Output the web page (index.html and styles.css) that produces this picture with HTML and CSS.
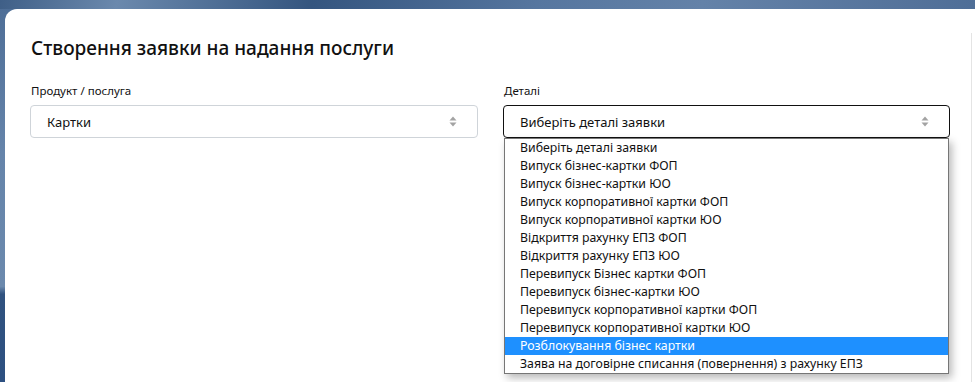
FILE: index.html
```html
<!DOCTYPE html>
<html lang="uk">
<head>
<meta charset="utf-8">
<title>Створення заявки</title>
<link rel="stylesheet" href="styles.css">
</head>
<body>
<div class="card">
  <h1 class="title">Створення заявки на надання послуги</h1>
  <div class="form-row">
    <div class="field">
      <label class="label">Продукт / послуга</label>
      <div class="select">
        <span class="value">Картки</span>
        <svg class="caret" width="8" height="11" viewBox="0 0 8 11"><path d="M4 0.5 L7.5 4.5 H0.5 Z M4 10.5 L7.5 6.5 H0.5 Z" fill="#a3a3a3"/></svg>
      </div>
    </div>
    <div class="field">
      <label class="label">Деталі</label>
      <div class="select focused">
        <span class="value">Виберіть деталі заявки</span>
        <svg class="caret" width="8" height="11" viewBox="0 0 8 11"><path d="M4 0.5 L7.5 4.5 H0.5 Z M4 10.5 L7.5 6.5 H0.5 Z" fill="#a3a3a3"/></svg>
        <ul class="options">
          <li>Виберіть деталі заявки</li>
          <li>Випуск бізнес-картки ФОП</li>
          <li>Випуск бізнес-картки ЮО</li>
          <li>Випуск корпоративної картки ФОП</li>
          <li>Випуск корпоративної картки ЮО</li>
          <li>Відкриття рахунку ЕПЗ ФОП</li>
          <li>Відкриття рахунку ЕПЗ ЮО</li>
          <li>Перевипуск Бізнес картки ФОП</li>
          <li>Перевипуск бізнес-картки ЮО</li>
          <li>Перевипуск корпоративної картки ФОП</li>
          <li>Перевипуск корпоративної картки ЮО</li>
          <li class="active">Розблокування бізнес картки</li>
          <li>Заява на договірне списання (повернення) з рахунку ЕПЗ</li>
        </ul>
      </div>
    </div>
  </div>
</div>
</body>
</html>
```
FILE: styles.css
```css
html, body {
  margin: 0;
  height: 100%;
}
body {
  font-family: "Noto Sans", "Open Sans", sans-serif;
  color: #212529;
  background:
    linear-gradient(100deg, #3f5f87 0%, #6b89ad 12%, #34557f 32%, #56769f 55%, #6482a8 72%, #4f6e97 100%) top left / 100% 9px no-repeat,
    linear-gradient(180deg, #4d6d96 0%, #6584aa 40%, #6b89ad 75%, #30527f 77%, #2d5081 100%);
  padding: 9px 0 0 5px;
  box-sizing: border-box;
  overflow: hidden;
}
.card {
  position: relative;
  background: #fff;
  border-top-left-radius: 12px;
  height: 100%;
  padding: 25px 25px 0 25px;
  box-sizing: border-box;
}
.card::after {
  content: "";
  position: absolute;
  right: 3px;
  top: 24px;
  bottom: 0;
  width: 1px;
  background: #e4e4e4;
}
.title {
  margin: 0 0 0 1px;
  font-size: 19px;
  line-height: 28px;
  font-weight: 500;
  color: #111;
}
.form-row {
  display: grid;
  grid-template-columns: 448px 447px;
  column-gap: 25px;
  margin-top: 21px;
}
.field {
  display: flex;
  flex-direction: column;
}
.label {
  font-size: 11.5px;
  line-height: 16px;
  margin: 0 0 6px 1px;
  color: #111;
}
.select {
  position: relative;
  height: 33px;
  box-sizing: border-box;
  border: 1px solid #cfd4d9;
  border-radius: 4px;
  display: flex;
  align-items: center;
  padding: 0 20px 0 16px;
}
.select.focused {
  border-color: #111;
}
.value {
  flex: 1;
  font-size: 13px;
  color: #111;
}
.caret {
  display: block;
}
.options {
  position: absolute;
  left: 0;
  right: 0;
  top: 32px;
  margin: 0;
  padding: 0;
  list-style: none;
  background: #fff;
  border: 1px solid #767676;
  box-shadow: 3px 4px 8px rgba(0, 0, 0, 0.28);
  z-index: 2;
}
.options li {
  height: 18px;
  line-height: 18px;
  font-size: 12.3px;
  padding-left: 15px;
  color: #111;
  white-space: nowrap;
}
.options li.active {
  background: #1e90ff;
  color: #fff;
}
```
